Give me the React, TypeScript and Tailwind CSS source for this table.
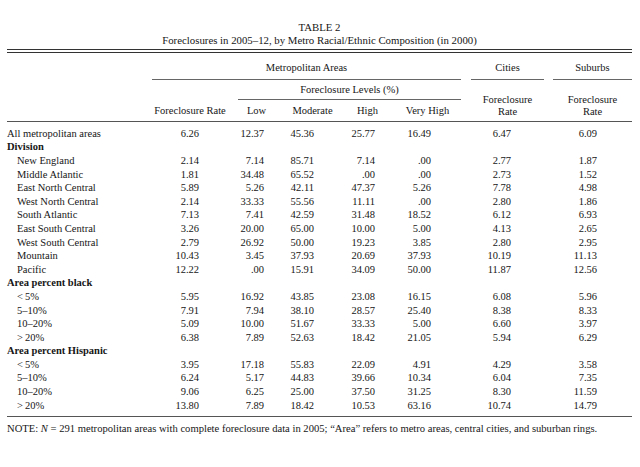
import React from "react";

type Row = {
  label: string;
  values?: string[];
  bold?: boolean;
  indent?: boolean;
};

const rows: Row[] = [
  { label: "All metropolitan areas", values: ["6.26", "12.37", "45.36", "25.77", "16.49", "6.47", "6.09"] },
  { label: "Division", bold: true },
  { label: "New England", indent: true, values: ["2.14", "7.14", "85.71", "7.14", ".00", "2.77", "1.87"] },
  { label: "Middle Atlantic", indent: true, values: ["1.81", "34.48", "65.52", ".00", ".00", "2.73", "1.52"] },
  { label: "East North Central", indent: true, values: ["5.89", "5.26", "42.11", "47.37", "5.26", "7.78", "4.98"] },
  { label: "West North Central", indent: true, values: ["2.14", "33.33", "55.56", "11.11", ".00", "2.80", "1.86"] },
  { label: "South Atlantic", indent: true, values: ["7.13", "7.41", "42.59", "31.48", "18.52", "6.12", "6.93"] },
  { label: "East South Central", indent: true, values: ["3.26", "20.00", "65.00", "10.00", "5.00", "4.13", "2.65"] },
  { label: "West South Central", indent: true, values: ["2.79", "26.92", "50.00", "19.23", "3.85", "2.80", "2.95"] },
  { label: "Mountain", indent: true, values: ["10.43", "3.45", "37.93", "20.69", "37.93", "10.19", "11.13"] },
  { label: "Pacific", indent: true, values: ["12.22", ".00", "15.91", "34.09", "50.00", "11.87", "12.56"] },
  { label: "Area percent black", bold: true },
  { label: "<\u20095%", indent: true, values: ["5.95", "16.92", "43.85", "23.08", "16.15", "6.08", "5.96"] },
  { label: "5\u201310%", indent: true, values: ["7.91", "7.94", "38.10", "28.57", "25.40", "8.38", "8.33"] },
  { label: "10\u201320%", indent: true, values: ["5.09", "10.00", "51.67", "33.33", "5.00", "6.60", "3.97"] },
  { label: ">\u200920%", indent: true, values: ["6.38", "7.89", "52.63", "18.42", "21.05", "5.94", "6.29"] },
  { label: "Area percent Hispanic", bold: true },
  { label: "<\u20095%", indent: true, values: ["3.95", "17.18", "55.83", "22.09", "4.91", "4.29", "3.58"] },
  { label: "5\u201310%", indent: true, values: ["6.24", "5.17", "44.83", "39.66", "10.34", "6.04", "7.35"] },
  { label: "10\u201320%", indent: true, values: ["9.06", "6.25", "25.00", "37.50", "31.25", "8.30", "11.59"] },
  { label: ">\u200920%", indent: true, values: ["13.80", "7.89", "18.42", "10.53", "63.16", "10.74", "14.79"] },
];

const grid =
  "grid grid-cols-[143px_88px_37px_75px_35px_76px_10px_73px_9px_79px]";

// right padding of each numeric column so the figures line up like the print
const pads = ["pr-[39px]", "pr-[11px]", "pr-[36px]", "pr-[10px]", "pr-[30px]", "pr-[33px]", "pr-[35px]"];

const TableRow = ({ row }: { row: Row }) => {
  const v = row.values || [];
  const cell = (i: number) => (
    <div className={"text-right " + pads[i]}>{v[i] ?? ""}</div>
  );
  return (
    <div className={grid + " h-[13.6px] leading-[13.6px]"}>
      <div
        className={
          (row.indent ? "pl-[10px] " : "") + (row.bold ? "font-bold" : "")
        }
      >
        {row.label}
      </div>
      {cell(0)}
      {cell(1)}
      {cell(2)}
      {cell(3)}
      {cell(4)}
      <div />
      {cell(5)}
      <div />
      {cell(6)}
    </div>
  );
};

const App = () => {
  return (
    <div className="w-[640px] h-[467px] bg-white pl-[7px] pr-[8px] pt-[21px] text-[10.5px] text-[#161616] font-['Liberation_Serif',serif]">
      {/* title */}
      <div className="text-center leading-[13px] text-[10.8px]">TABLE 2</div>
      <div className="text-center leading-[13px] text-[10.8px]">
        Foreclosures in 2005–12, by Metro Racial/Ethnic Composition (in 2000)
      </div>
      <div className="mt-[2px] h-[4px] border-y border-[#333]" />

      {/* column headers */}
      <div className={grid + " leading-[13.6px] border-b-[1.5px] border-[#555]"}>
        <div className="col-start-2 col-span-5 row-start-1 ml-[2px] pt-[8px] pb-[4px] text-center border-b border-[#666]">
          Metropolitan Areas
        </div>
        <div className="col-start-8 row-start-1 pt-[8px] pb-[4px] text-center border-b border-[#666]">
          Cities
        </div>
        <div className="col-start-10 row-start-1 pt-[8px] pb-[4px] text-center border-b border-[#666]">
          Suburbs
        </div>
        <div className="col-start-3 col-span-4 row-start-2 pt-[3px] pb-[3px] text-center border-b border-[#666]">
          Foreclosure Levels (%)
        </div>
        <div className="col-start-8 row-start-2 row-span-2 flex flex-col justify-end pb-[3px] text-center leading-[12px]">
          <span>Foreclosure</span>
          <span>Rate</span>
        </div>
        <div className="col-start-10 row-start-2 row-span-2 flex flex-col justify-end pb-[3px] text-center leading-[12px]">
          <span>Foreclosure</span>
          <span>Rate</span>
        </div>
        <div className="col-start-2 row-start-3 pt-[4px] pb-[3px] pr-[8px] text-center">
          Foreclosure Rate
        </div>
        <div className="col-start-3 row-start-3 pt-[4px] pb-[3px] text-center">Low</div>
        <div className="col-start-4 row-start-3 pt-[4px] pb-[3px] text-center">Moderate</div>
        <div className="col-start-5 row-start-3 pt-[4px] pb-[3px] text-center">High</div>
        <div className="col-start-6 row-start-3 pt-[4px] pb-[3px] pl-[9px] text-center">
          Very High
        </div>
      </div>

      {/* body */}
      <div className="mt-[5px]">
        {rows.map((r, i) => (
          <TableRow key={i} row={r} />
        ))}
      </div>
      <div className="mt-[4px] border-t-[1.5px] border-[#555]" />

      <div className="mt-[5px] leading-[13.6px] text-[10.6px]">
        NOTE: <i>N</i> = 291 metropolitan areas with complete foreclosure data in
        2005; “Area” refers to metro areas, central cities, and suburban rings.
      </div>
    </div>
  );
};

export default App;
